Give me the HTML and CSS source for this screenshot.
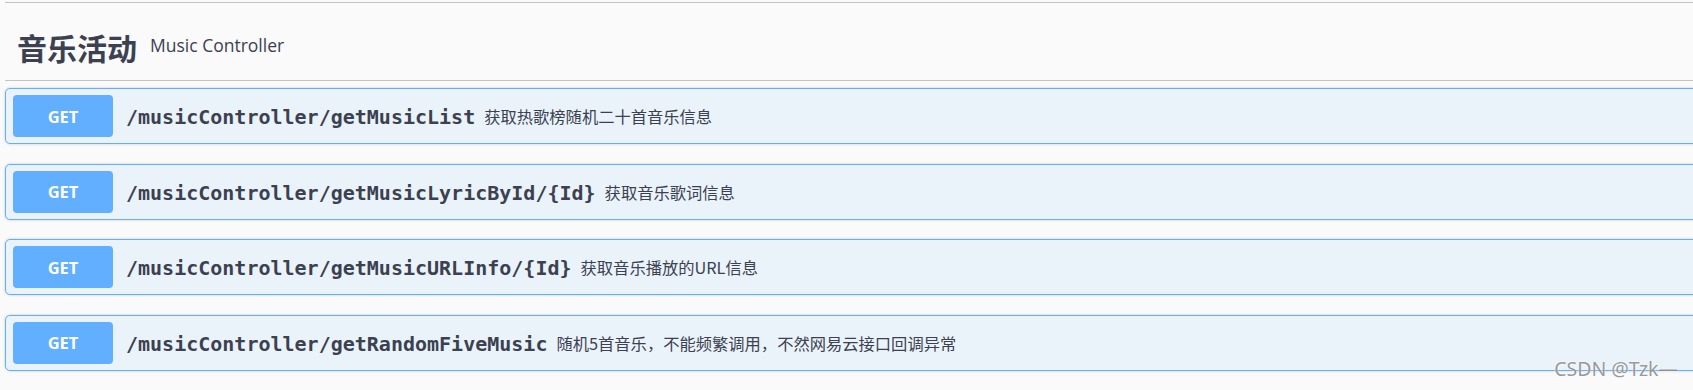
FILE: index.html
```html
<!DOCTYPE html>
<html lang="zh-CN">

<head>
    <meta charset="UTF-8">
    <meta name="viewport" content="width=device-width, initial-scale=1.0">
    <title>Music Controller</title>
    <link rel="stylesheet" href="styles.css">
</head>

<body>
    <div class="tag-section">
        <h3 class="opblock-tag">
            <span class="tag-name">音乐活动</span>
            <small class="tag-desc">Music Controller</small>
        </h3>
        <div class="opblocks">
            <div class="opblock">
                <span class="method">GET</span>
                <span class="path">/musicController/getMusicList</span>
                <span class="summary">获取热歌榜随机二十首音乐信息</span>
            </div>
            <div class="opblock">
                <span class="method">GET</span>
                <span class="path">/musicController/getMusicLyricById/{Id}</span>
                <span class="summary">获取音乐歌词信息</span>
            </div>
            <div class="opblock">
                <span class="method">GET</span>
                <span class="path">/musicController/getMusicURLInfo/{Id}</span>
                <span class="summary">获取音乐播放的URL信息</span>
            </div>
            <div class="opblock">
                <span class="method">GET</span>
                <span class="path">/musicController/getRandomFiveMusic</span>
                <span class="summary">随机5首音乐，不能频繁调用，不然网易云接口回调异常</span>
            </div>
        </div>
    </div>
    <div class="watermark">CSDN @Tzk—</div>
</body>

</html>
```

FILE: styles.css
```css
html,
body {
    margin: 0;
    height: 100%;
    overflow: hidden;
}

body {
    background: #fafafa;
    color: #3b4151;
    font-family: 'Open Sans', 'Noto Sans CJK SC', sans-serif;
    position: relative;
}

.tag-section {
    margin: 2px -30px 0 5px;
    border-top: 1px solid #c1c3c7;
}

.opblock-tag {
    display: flex;
    align-items: center;
    height: 78px;
    box-sizing: border-box;
    padding: 10px 0 0 12px;
    margin: 0 0 7px 0;
    border-bottom: 1px solid #c1c3c7;
}

.tag-name {
    font-family: 'Noto Sans CJK SC', sans-serif;
    font-size: 30px;
    font-weight: bold;
}

.tag-desc {
    font-family: 'Open Sans', sans-serif;
    font-size: 17.5px;
    font-weight: normal;
    margin-left: 13px;
    position: relative;
    top: -2px;
}

.opblock {
    display: flex;
    align-items: center;
    height: 56px;
    box-sizing: border-box;
    padding: 0 7px;
    margin-bottom: 19.5px;
    background: #ebf3fa;
    border: 1px solid #61affe;
    border-radius: 5px;
    box-shadow: 0 0 3px rgba(0, 0, 0, 0.19);
}

.method {
    display: flex;
    align-items: center;
    justify-content: center;
    width: 100px;
    height: 42px;
    border-radius: 4px;
    background: #61affe;
    color: #fff;
    font-family: 'Open Sans', sans-serif;
    font-size: 16.5px;
    font-weight: bold;
    flex-shrink: 0;
}

.path {
    font-family: 'DejaVu Sans Mono', monospace;
    font-size: 20px;
    font-weight: bold;
    padding: 0 9px 0 13px;
    position: relative;
    top: 1px;
}

.summary {
    font-family: 'Noto Sans CJK SC', sans-serif;
    font-size: 16.3px;
}

.watermark {
    position: absolute;
    right: 15px;
    bottom: 8px;
    font-family: 'Noto Sans', 'Noto Sans CJK SC', sans-serif;
    font-size: 19.5px;
    color: rgba(120, 120, 120, 0.75);
    text-shadow: 0 0 2px #fff;
}
```
